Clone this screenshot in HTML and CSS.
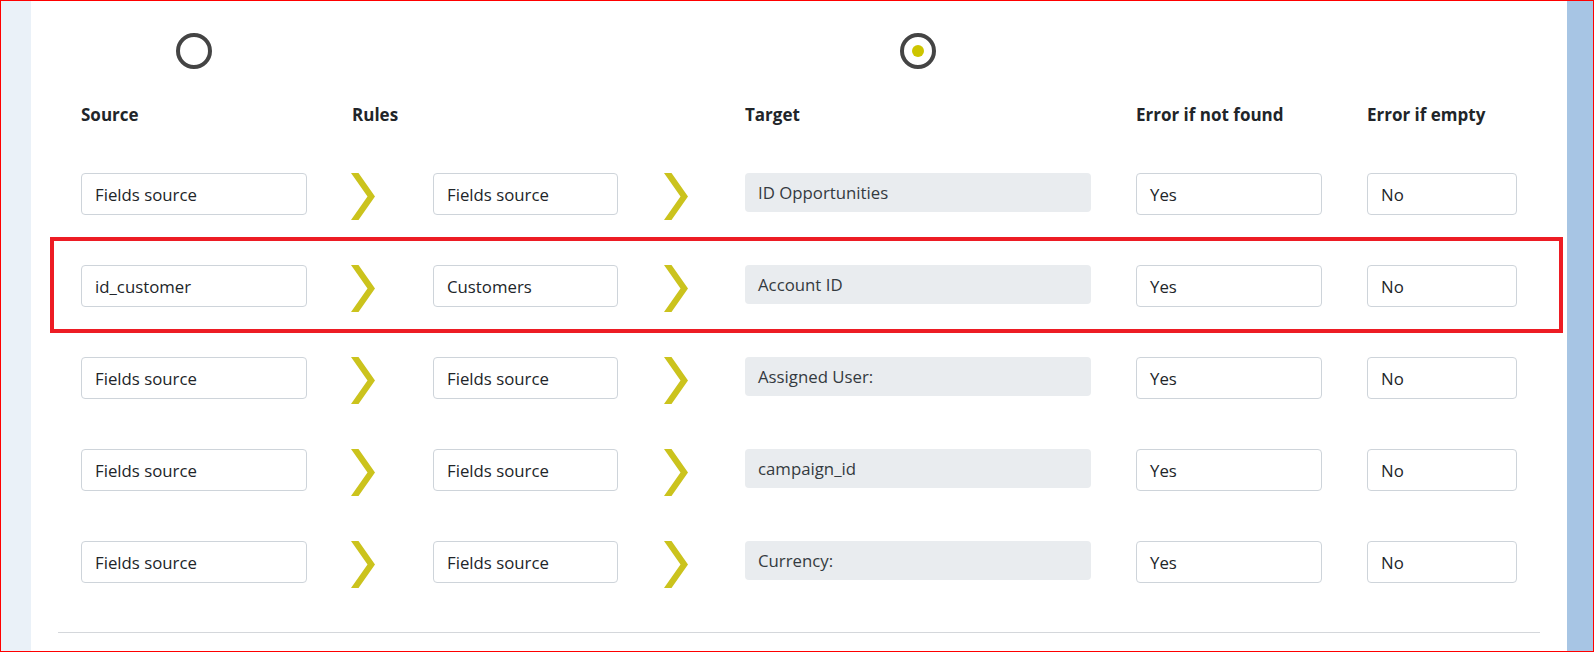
FILE: index.html
```html
<!DOCTYPE html>
<html lang="en">
<head>
<meta charset="utf-8">
<title>Mapping</title>
<link rel="stylesheet" href="styles.css">
</head>
<body>
<div class="frame">
  <div class="strip-left"></div>
  <main class="panel">
    <div class="grid">
      <div class="row radios">
        <div class="col-src center"><span class="radio"></span></div>
        <div class="col-ch1"></div>
        <div class="col-rules"></div>
        <div class="col-ch2"></div>
        <div class="col-tgt center"><span class="radio checked"></span></div>
      </div>
      <div class="row heads">
        <div class="col-src">Source</div>
        <div class="col-ch1 head-rules">Rules</div>
        <div class="col-rules"></div>
        <div class="col-ch2"></div>
        <div class="col-tgt">Target</div>
        <div class="col-yes">Error if not found</div>
        <div class="col-no">Error if empty</div>
      </div>

      <div class="row map">
        <div class="col-src field">Fields source</div>
        <svg class="col-ch1 chev" viewBox="0 0 24 47"><polygon points="0,0 7.5,0 24,23.5 7.5,47 0,47 16.5,23.5"/></svg>
        <div class="col-rules field">Fields source</div>
        <svg class="col-ch2 chev" viewBox="0 0 24 47"><polygon points="0,0 7.5,0 24,23.5 7.5,47 0,47 16.5,23.5"/></svg>
        <div class="col-tgt target">ID Opportunities</div>
        <div class="col-yes field">Yes</div>
        <div class="col-no field">No</div>
      </div>

      <div class="row map highlight">
        <div class="col-src field">id_customer</div>
        <svg class="col-ch1 chev" viewBox="0 0 24 47"><polygon points="0,0 7.5,0 24,23.5 7.5,47 0,47 16.5,23.5"/></svg>
        <div class="col-rules field">Customers</div>
        <svg class="col-ch2 chev" viewBox="0 0 24 47"><polygon points="0,0 7.5,0 24,23.5 7.5,47 0,47 16.5,23.5"/></svg>
        <div class="col-tgt target">Account ID</div>
        <div class="col-yes field">Yes</div>
        <div class="col-no field">No</div>
      </div>

      <div class="row map">
        <div class="col-src field">Fields source</div>
        <svg class="col-ch1 chev" viewBox="0 0 24 47"><polygon points="0,0 7.5,0 24,23.5 7.5,47 0,47 16.5,23.5"/></svg>
        <div class="col-rules field">Fields source</div>
        <svg class="col-ch2 chev" viewBox="0 0 24 47"><polygon points="0,0 7.5,0 24,23.5 7.5,47 0,47 16.5,23.5"/></svg>
        <div class="col-tgt target">Assigned User:</div>
        <div class="col-yes field">Yes</div>
        <div class="col-no field">No</div>
      </div>

      <div class="row map">
        <div class="col-src field">Fields source</div>
        <svg class="col-ch1 chev" viewBox="0 0 24 47"><polygon points="0,0 7.5,0 24,23.5 7.5,47 0,47 16.5,23.5"/></svg>
        <div class="col-rules field">Fields source</div>
        <svg class="col-ch2 chev" viewBox="0 0 24 47"><polygon points="0,0 7.5,0 24,23.5 7.5,47 0,47 16.5,23.5"/></svg>
        <div class="col-tgt target">campaign_id</div>
        <div class="col-yes field">Yes</div>
        <div class="col-no field">No</div>
      </div>

      <div class="row map">
        <div class="col-src field">Fields source</div>
        <svg class="col-ch1 chev" viewBox="0 0 24 47"><polygon points="0,0 7.5,0 24,23.5 7.5,47 0,47 16.5,23.5"/></svg>
        <div class="col-rules field">Fields source</div>
        <svg class="col-ch2 chev" viewBox="0 0 24 47"><polygon points="0,0 7.5,0 24,23.5 7.5,47 0,47 16.5,23.5"/></svg>
        <div class="col-tgt target">Currency:</div>
        <div class="col-yes field">Yes</div>
        <div class="col-no field">No</div>
      </div>
    </div>
    <hr class="divider">
  </main>
  <div class="strip-right"></div>
</div>
</body>
</html>
```

FILE: styles.css
```css
* { box-sizing: border-box; }
html, body { margin: 0; padding: 0; }
body {
  font-family: "Open Sans", "Noto Sans", "Liberation Sans", sans-serif;
  color: #212529;
  background: #fff;
}
.frame {
  width: 1594px;
  height: 652px;
  border: 1px solid #ff0000;
  display: flex;
  overflow: hidden;
}
.strip-left { width: 30px; background: #eaf1f8; flex: none; }
.strip-right { width: 26px; background: #a7c5e4; flex: none; }
.panel {
  flex: 1;
  background: #fff;
  padding: 32px 27px 0;
  display: flex;
  flex-direction: column;
}
.grid {
  margin-left: 23px;
  display: flex;
  flex-direction: column;
}
.row {
  display: flex;
  align-items: flex-start;
  position: relative;
}
.col-src { width: 226px; flex: none; }
.col-ch1 { width: 24px; margin-left: 44px; flex: none; }
.col-rules { width: 185px; margin-left: 58px; flex: none; }
.col-ch2 { width: 24px; margin-left: 46px; flex: none; }
.col-tgt { width: 346px; margin-left: 57px; flex: none; }
.col-yes { width: 186px; margin-left: 45px; flex: none; }
.col-no { width: 150px; margin-left: 45px; flex: none; }

.center { display: flex; justify-content: center; }
.radios { height: 36px; }
.radio {
  display: flex;
  align-items: center;
  justify-content: center;
  width: 36px;
  height: 36px;
  border: 4.5px solid #444;
  border-radius: 50%;
}
.radio.checked::before {
  content: "";
  width: 12px;
  height: 12px;
  border-radius: 50%;
  background: #cdc500;
}

.heads {
  margin-top: 37px;
  font-weight: 700;
  font-size: 17px;
  line-height: 17px;
  height: 17px;
  white-space: nowrap;
}
.head-rules { padding-left: 1px; }

.map { margin-top: 45px; height: 47px; }
.heads + .map { margin-top: 50px; }

.field {
  height: 42px;
  border: 1px solid #ced4da;
  border-radius: 4px;
  padding: 0 13px;
  display: flex;
  align-items: center;
  font-size: 16.8px;
  color: #212529;
  background: #fff;
}
.target {
  height: 39px;
  background: #e9ecef;
  border-radius: 4px;
  padding: 0 13px;
  display: flex;
  align-items: center;
  font-size: 16.8px;
  color: #343a40;
}
.chev { height: 47px; display: block; }
.chev polygon { fill: #cbc31d; }

.highlight::after {
  content: "";
  position: absolute;
  left: -31px;
  right: -23px;
  top: -28px;
  bottom: -21px;
  border: 4px solid #ed1c24;
  pointer-events: none;
}

.divider {
  margin: 44px 0 0;
  border: 0;
  border-top: 1px solid #d4d7db;
  height: 0;
}
```
